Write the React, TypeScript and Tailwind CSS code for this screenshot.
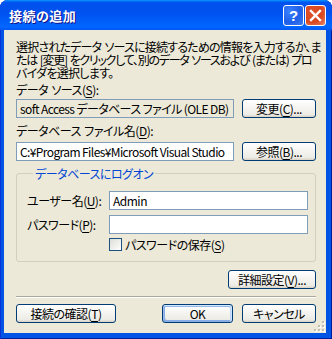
import React from "react";

const Mn = ({ k }: { k: string }) => (
  <span className="underline decoration-1 underline-offset-[2px]">{k}</span>
);

const XpButton = ({
  children,
  className = "",
  primary = false,
}: {
  children: React.ReactNode;
  className?: string;
  primary?: boolean;
}) => (
  <div
    className={`flex h-[19px] shrink-0 items-center justify-center whitespace-nowrap rounded-[3px] border border-[#003C74] bg-[linear-gradient(180deg,#FFFFFF,#ECEBE5_86%,#D8D0C4)] text-[12px] leading-none text-black ${
      primary
        ? "shadow-[inset_-1px_1px_#CEE7FF,inset_1px_2px_#98B8EA,inset_-2px_2px_#BCD4F6,inset_1px_-1px_#89ADE4,inset_2px_-2px_#89ADE4]"
        : ""
    } ${className}`}
  >
    {children}
  </div>
);

const Edit = ({
  value,
  readOnly = false,
  className = "",
}: {
  value: string;
  readOnly?: boolean;
  className?: string;
}) => (
  <div
    className={`h-[19px] min-w-0 shrink-0 overflow-hidden whitespace-nowrap border border-[#7F9DB9] px-[3px] text-[12px] leading-[17px] ${
      readOnly ? "bg-[#ECE9D8]" : "bg-white"
    } ${className}`}
  >
    {value}
  </div>
);

export default function App() {
  return (
    <div className="h-[339px] w-[332px] bg-white font-['Noto_Sans_CJK_JP','Noto_Sans',sans-serif] text-black [font-feature-settings:'palt']">
      <div className="flex h-full flex-col rounded-t-[8px] bg-[#0054E3] shadow-[inset_1px_0_#0831D9,inset_-1px_0_#001EA0,inset_0_-1px_#001EA0]">
        {/* title bar */}
        <div className="flex h-[30px] shrink-0 items-center rounded-t-[8px] bg-[linear-gradient(180deg,#0997FF,#0053EE_8%,#0050EE_40%,#0066FF_88%,#0066FF_93%,#005BFF_95%,#0A5AE8_100%)] pl-[9px] pr-[6px]">
          <span className="flex-1 text-[13px] font-bold leading-none tracking-[0.5px] text-white [text-shadow:1px_1px_#0F1089]">
            接続の追加
          </span>
          <div className="flex gap-[1px] pt-[1px]">
            <div className="flex h-[21px] w-[21px] items-center justify-center rounded-[3px] border border-white bg-[radial-gradient(circle_at_30%_30%,#3C82FF_0%,#1E5FE8_55%,#3F7CF2_100%)] font-['Liberation_Sans',sans-serif] text-[15px] font-bold leading-none text-white">
              ?
            </div>
            <div className="flex h-[21px] w-[21px] items-center justify-center rounded-[3px] border border-white bg-[radial-gradient(circle_at_35%_35%,#E0512B_0%,#D9471F_55%,#EB8A6C_100%)]">
              <svg width="13" height="13" viewBox="0 0 13 13">
                <path
                  d="M2 2 L11 11 M11 2 L2 11"
                  stroke="white"
                  strokeWidth="2.4"
                  strokeLinecap="square"
                />
              </svg>
            </div>
          </div>
        </div>

        {/* client area */}
        <div className="relative mb-[6px] ml-[4px] mr-[6px] flex flex-1 flex-col bg-[#ECE9D8] pl-[12px] pr-[10px] pt-[10px] text-[12px] leading-[13px] tracking-[-0.5px]">
          <div className="whitespace-nowrap">
            <div className="tracking-[-0.8px]">選択されたデータ{"\u2004"}ソースに接続するための情報を入力するか、ま</div>
            <div className="tracking-[-1.25px]">
              たは{"\u2004"}[変更]{"\u2004"}をクリックして、別のデータ{"\u2004"}ソースおよび{"\u2004"}(または){"\u2004"}プロ
            </div>
            <div className="tracking-[-0.7px]">バイダを選択します。</div>
          </div>

          <div className="mt-[4px] h-[13px]">
            データ{"\u2004"}ソース(<Mn k="S" />):
          </div>
          <div className="mt-[3px] flex gap-[8px]">
            <Edit
              value="soft Access データベース ファイル (OLE DB)"
              readOnly
              className="w-[218px] tracking-[-0.6px]"
            />
            <XpButton className="w-[74px]">
              変更(<Mn k="C" />)...
            </XpButton>
          </div>

          <div className="mt-[6px] h-[13px]">
            データベース{"\u2004"}ファイル名(<Mn k="D" />):
          </div>
          <div className="mt-[5px] flex gap-[8px]">
            <Edit
              value="C:¥Program Files¥Microsoft Visual Studio"
              className="w-[218px] tracking-[-0.6px]"
            />
            <XpButton className="w-[74px]">
              参照(<Mn k="B" />)...
            </XpButton>
          </div>

          <fieldset className="mt-[6px] rounded-[3px] border border-[#D0D0BF] pb-[10px] pl-[10px] pr-[7px]">
            <legend className="ml-[6px] px-[2px] leading-[13px] text-[#0046D5]">
              データベースにログオン
            </legend>
            <div className="mt-[11px] flex items-center">
              <div className="w-[82px]">
                ユーザー名(<Mn k="U" />):
              </div>
              <Edit value="Admin" className="flex-1" />
            </div>
            <div className="mt-[5px] flex items-center">
              <div className="w-[82px]">
                パスワード(<Mn k="P" />):
              </div>
              <Edit value="" className="flex-1" />
            </div>
            <div className="mt-[4px] flex h-[13px] items-center pl-[82px]">
              <div className="h-[13px] w-[13px] shrink-0 border border-[#1C5180] bg-[linear-gradient(135deg,#DCDCD7,#FFFFFF)]" />
              <span className="ml-[3px]">
                パスワードの保存(<Mn k="S" />)
              </span>
            </div>
          </fieldset>

          <div className="mt-[8px] flex justify-end">
            <XpButton className="w-[88px]">
              詳細設定(<Mn k="V" />)...
            </XpButton>
          </div>

          <div className="mt-[7px] border-b border-t border-b-white border-t-[#ACA899]" />

          <div className="mt-[6px] flex">
            <XpButton className="w-[100px]">
              接続の確認(<Mn k="T" />)
            </XpButton>
            <div className="flex-1" />
            <XpButton primary className="w-[71px]">
              OK
            </XpButton>
            <XpButton className="ml-[9px] w-[74px]">キャンセル</XpButton>
          </div>

          {/* resize grip */}
          <svg
            className="absolute bottom-[1px] right-[1px]"
            width="12"
            height="12"
            viewBox="0 0 12 12"
          >
            {[
              [9, 1],
              [5, 5],
              [9, 5],
              [1, 9],
              [5, 9],
              [9, 9],
            ].map(([x, y]) => (
              <g key={`${x}-${y}`}>
                <rect x={x + 1} y={y + 1} width="2" height="2" fill="#FFFFFF" />
                <rect x={x} y={y} width="2" height="2" fill="#C1BEB1" />
              </g>
            ))}
          </svg>
        </div>
      </div>
    </div>
  );
}
